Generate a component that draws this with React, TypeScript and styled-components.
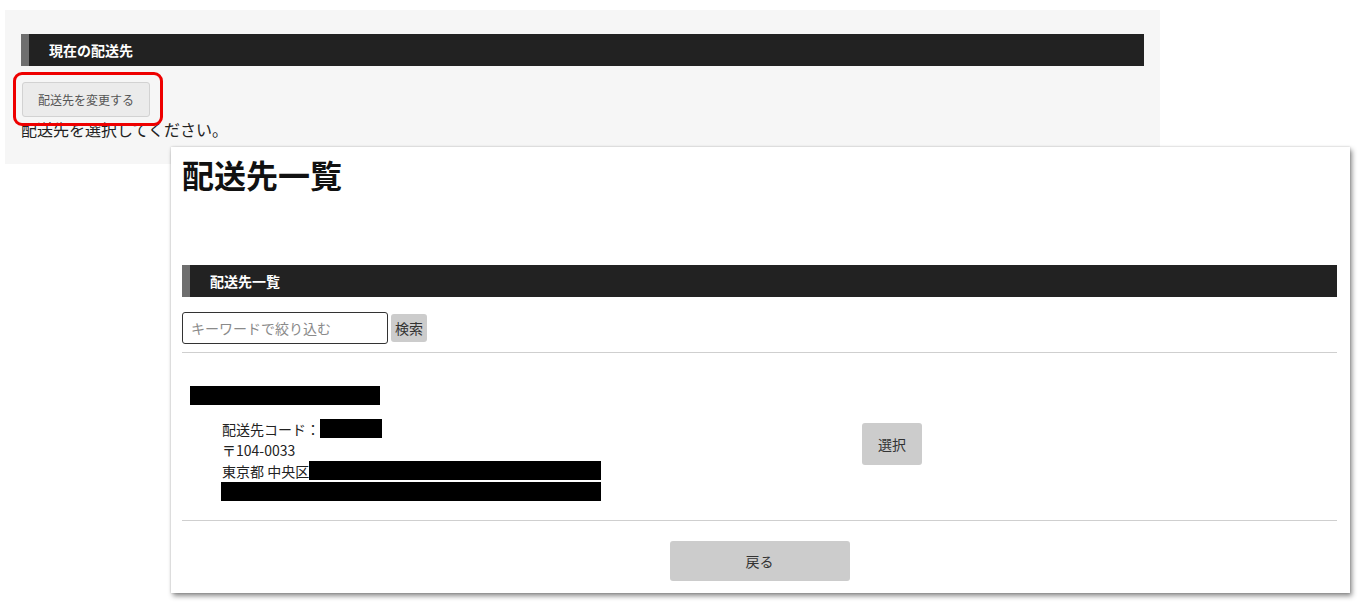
import styled, { createGlobalStyle } from "styled-components"

const GlobalStyle = createGlobalStyle`
  html, body {
    margin: 0;
    padding: 0;
    background: #fff;
    font-family: "Noto Sans CJK JP", "Noto Sans", sans-serif;
    color: #222;
  }
`

const Page = styled.div`
  position: relative;
  padding: 10px 0 0 5px;
  height: 604px;
  box-sizing: border-box;
`

const Panel = styled.section`
  position: relative;
  width: 1155px;
  box-sizing: border-box;
  background: #f6f6f6;
  padding: 24px 16px 23px;
`

const Bar = styled.h2`
  margin: 0;
  height: 32px;
  display: flex;
  align-items: center;
  box-sizing: border-box;
  background: #222;
  border-left: 8px solid #6e6e6e;
  padding-left: 20px;
  color: #fff;
  font-size: 14px;
  font-weight: 700;
`

const ChangeButton = styled.button`
  display: block;
  margin: 16px 0 0 1px;
  width: 128px;
  height: 35px;
  background: #ebebeb;
  border: 1px solid #d2d2d2;
  border-radius: 3px;
  color: #555;
  font-family: inherit;
  font-size: 12px;
`

const Note = styled.p`
  margin: 0;
  font-size: 16px;
  line-height: 24px;
  color: #222;
`

const Highlight = styled.div`
  position: absolute;
  left: 8px;
  top: 62px;
  width: 150px;
  height: 54px;
  box-sizing: border-box;
  border: 3px solid #ee0000;
  border-radius: 9px;
  pointer-events: none;
`

const Modal = styled.div`
  position: absolute;
  left: 171px;
  top: 147px;
  width: 1179px;
  box-sizing: border-box;
  background: #fff;
  padding: 8px 13px 12px 11px;
  box-shadow: 2px 3px 5px rgba(0, 0, 0, 0.45), 0 0 2px rgba(0, 0, 0, 0.2);
`

const Title = styled.h1`
  margin: 0 0 72px;
  font-size: 32px;
  line-height: 38px;
  font-weight: 700;
  color: #111;
`

const SearchRow = styled.div`
  display: flex;
  align-items: center;
  gap: 3px;
  margin-top: 15px;
`

const SearchInput = styled.input`
  width: 206px;
  height: 32px;
  box-sizing: border-box;
  border: 1px solid #333;
  border-radius: 3px;
  padding: 0 8px;
  font-family: inherit;
  font-size: 14px;
  &::placeholder {
    color: #8a8a8a;
  }
`

const GreyButton = styled.button<{ $w: number; $h: number }>`
  width: ${p => p.$w}px;
  height: ${p => p.$h}px;
  padding: 0;
  border: none;
  border-radius: 3px;
  background: #cccccc;
  color: #333;
  font-family: inherit;
  font-size: 14px;
`

const Rule = styled.hr<{ $top?: number }>`
  margin: ${p => p.$top ?? 0}px 0 0;
  border: none;
  border-top: 1px solid #cfcfcf;
`

const Entry = styled.div`
  display: grid;
  grid-template-columns: 680px auto;
  align-items: center;
  padding: 33px 0 18px;
`

const Redacted = styled.span<{ $w: number }>`
  display: inline-block;
  width: ${p => p.$w}px;
  height: 19px;
  background: #000;
`

const NameLine = styled.div`
  padding-left: 8px;
  height: 19px;
  margin-bottom: 13px;
`

const Details = styled.div`
  padding-left: 40px;
`

const Line = styled.div`
  display: flex;
  align-items: center;
  height: 21px;
  font-size: 14px;
  color: #222;
`

const Footer = styled.div`
  display: flex;
  justify-content: center;
  padding-top: 20px;
`

export default function App() {
  return (
    <>
      <GlobalStyle />
      <Page>
        <Panel>
          <Bar>現在の配送先</Bar>
          <ChangeButton>配送先を変更する</ChangeButton>
          <Note>配送先を選択してください。</Note>
          <Highlight />
        </Panel>

        <Modal>
          <Title>配送先一覧</Title>
          <Bar>配送先一覧</Bar>
          <SearchRow>
            <SearchInput placeholder="キーワードで絞り込む" />
            <GreyButton $w={36} $h={28}>検索</GreyButton>
          </SearchRow>
          <Rule $top={8} />
          <Entry>
            <div>
              <NameLine>
                <Redacted $w={190} />
              </NameLine>
              <Details>
                <Line>
                  配送先コード：<Redacted $w={62} />
                </Line>
                <Line>〒104-0033</Line>
                <Line>
                  東京都 中央区<Redacted $w={292} />
                </Line>
                <Line>
                  <Redacted $w={380} style={{ marginLeft: -1 }} />
                </Line>
              </Details>
            </div>
            <div>
              <GreyButton $w={60} $h={42}>選択</GreyButton>
            </div>
          </Entry>
          <Rule />
          <Footer>
            <GreyButton $w={180} $h={40}>戻る</GreyButton>
          </Footer>
        </Modal>
      </Page>
    </>
  )
}
